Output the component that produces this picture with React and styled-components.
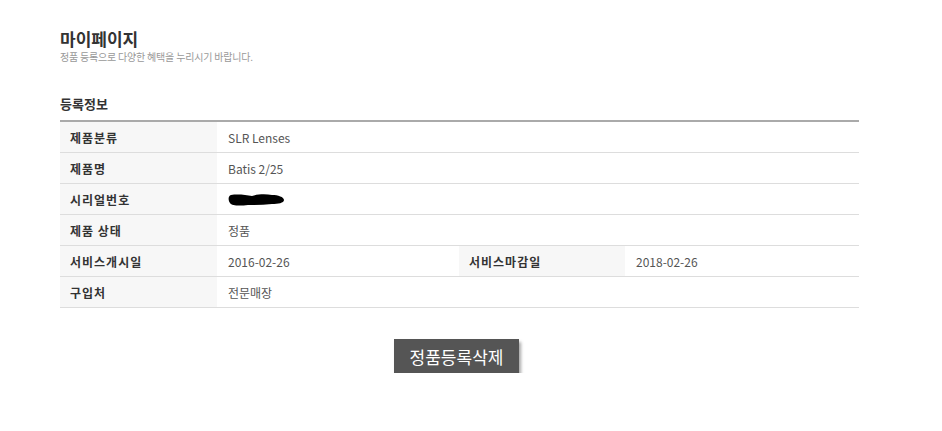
import styled, { createGlobalStyle } from "styled-components";

const GlobalStyle = createGlobalStyle`
  body {
    margin: 0;
    background: #fff;
    font-family: "Noto Sans CJK KR", "Noto Sans", sans-serif;
  }
`;

const Page = styled.div`
  width: 799px;
  padding: 29px 0 0 60px;
`;

const Title = styled.h1`
  margin: 0;
  font-size: 17px;
  line-height: 20px;
  font-weight: 700;
  color: #333;
  letter-spacing: 0;
`;

const SubTitle = styled.p`
  margin: 2px 0 0;
  font-size: 10px;
  line-height: 12px;
  color: #999;
  letter-spacing: -0.2px;
`;

const SectionTitle = styled.h2`
  margin: 32px 0 0;
  font-size: 13px;
  line-height: 18px;
  font-weight: 700;
  color: #333;
`;

const Table = styled.div`
  margin-top: 7px;
  border-top: 2px solid #aaa;
`;

const Row = styled.div`
  display: grid;
  grid-template-columns: 157px 242px 166px 1fr;
  height: 30px;
  border-bottom: 1px solid #ddd;
`;

const Label = styled.div`
  display: flex;
  align-items: center;
  padding-left: 10px;
  background: #f7f7f7;
  font-size: 12px;
  font-weight: 700;
  color: #333;
  letter-spacing: 1px;
`;

const Value = styled.div`
  display: flex;
  align-items: center;
  padding-left: 11px;
  font-size: 12px;
  color: #555;
  grid-column: ${(p) => (p.$wide ? "2 / 5" : "auto")};
`;

const Blot = styled.svg`
  display: block;
  margin-top: 1px;
`;

const Actions = styled.div`
  display: flex;
  justify-content: center;
  padding: 31px 6px 0 0;
`;

const DeleteButton = styled.button`
  width: 125px;
  height: 34px;
  border: none;
  background: #555;
  color: #fff;
  font-family: inherit;
  font-size: 17px;
  letter-spacing: 0;
  box-shadow: 2px 3px 3px rgba(0, 0, 0, 0.35);
  cursor: pointer;
`;

const rows = [
  { label: "제품분류", value: "SLR Lenses" },
  { label: "제품명", value: "Batis 2/25" },
  { label: "시리얼번호", hidden: true },
  { label: "제품 상태", value: "정품" },
];

function App() {
  return (
    <>
      <GlobalStyle />
      <Page>
        <Title>마이페이지</Title>
        <SubTitle>정품 등록으로 다양한 혜택을 누리시기 바랍니다.</SubTitle>
        <SectionTitle>등록정보</SectionTitle>
        <Table>
          {rows.map((r) => (
            <Row key={r.label}>
              <Label>{r.label}</Label>
              <Value $wide>
                {r.hidden ? (
                  <Blot width="57" height="12" viewBox="0 0 57 12">
                    <path
                      d="M3 1 C10 0 18 1 24 2 C30 0 38 0 44 1 C50 1 56 3 56 6 C56 9 50 10 44 10 C36 11 28 11 20 11 C12 12 4 12 2 9 C0 6 0 2 3 1 Z"
                      fill="#000"
                    />
                  </Blot>
                ) : (
                  r.value
                )}
              </Value>
            </Row>
          ))}
          <Row>
            <Label>서비스개시일</Label>
            <Value>2016-02-26</Value>
            <Label>서비스마감일</Label>
            <Value>2018-02-26</Value>
          </Row>
          <Row>
            <Label>구입처</Label>
            <Value $wide>전문매장</Value>
          </Row>
        </Table>
        <Actions>
          <DeleteButton>정품등록삭제</DeleteButton>
        </Actions>
      </Page>
    </>
  );
}

export default App;
